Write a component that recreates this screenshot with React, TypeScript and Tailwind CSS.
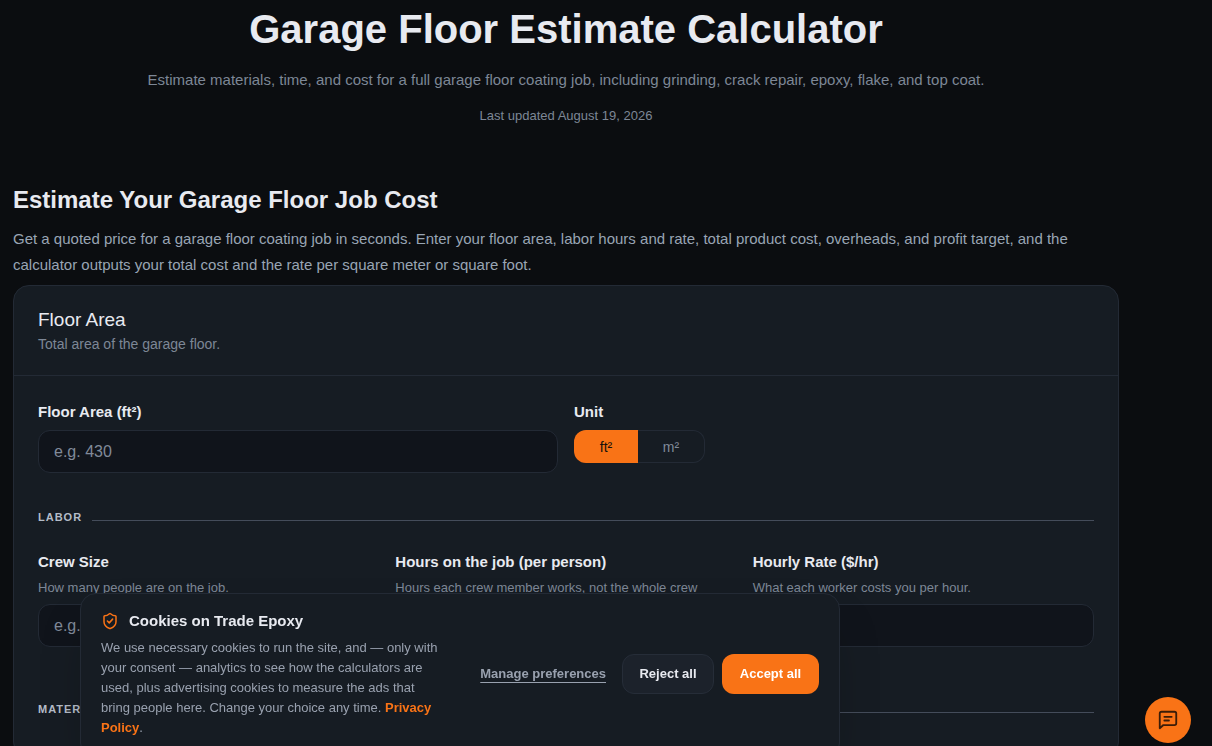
import React, { useState } from "react";

const inputClass =
  "w-full h-[43px] rounded-xl border border-[#232a35] bg-[#10141b] px-[15px] text-base text-[#e8eaf0] placeholder:text-[#808a99] focus:outline-none";

const ShieldIcon = () => (
  <svg width="18" height="18" viewBox="0 0 24 24" fill="none" stroke="currentColor" strokeWidth="2" strokeLinecap="round" strokeLinejoin="round" className="shrink-0 text-[#f97316]">
    <path d="M20 13c0 5-3.5 7.5-7.66 8.95a1 1 0 0 1-.67-.01C7.5 20.5 4 18 4 13V6a1 1 0 0 1 1-1c2 0 4.5-1.2 6.24-2.72a1.17 1.17 0 0 1 1.52 0C14.51 3.81 17 5 19 5a1 1 0 0 1 1 1z" />
    <path d="m8.5 12 2.5 2.5 4.5-5" />
  </svg>
);

const ChatIcon = () => (
  <svg width="22" height="22" viewBox="0 0 24 24" fill="none" stroke="currentColor" strokeWidth="2" strokeLinecap="round" strokeLinejoin="round">
    <path d="M21 15.5a2 2 0 0 1-2 2H7L3 21V5a2 2 0 0 1 2-2h14a2 2 0 0 1 2 2z" />
    <path d="M8 8.5h8" />
    <path d="M8 12.5h5" />
  </svg>
);

const Field = ({ id, label, hint, placeholder }: { id: string; label: string; hint?: string; placeholder?: string }) => {
  return (
    <div className="min-w-0">
      <label htmlFor={id} className="block text-[15px] leading-6 font-bold text-[#e8eaf0]">
        {label}
      </label>
      {hint && <p className="mt-1 text-[13px] leading-5 text-[#7d8796] whitespace-nowrap">{hint}</p>}
      <input id={id} type="text" inputMode="decimal" placeholder={placeholder} className={`${inputClass} mt-[6px]`} />
    </div>
  );
};

const SectionTitle = ({ children }: { children: React.ReactNode }) => {
  return (
    <div className="flex items-center gap-[10px]">
      <h4 className="text-[11px] leading-4 font-bold tracking-[1px] uppercase text-[#b4bcc8]">{children}</h4>
      <div className="mt-[6px] h-px flex-1 bg-[#444c5a]" />
    </div>
  );
};

const UnitToggle = ({ unit, setUnit }: { unit: string; setUnit: (unit: string) => void }) => {
  return (
    <div role="group" aria-labelledby="unit-label" className="mt-[6px] grid h-[33px] w-fit grid-cols-[64px_67px]">
      {["ft²", "m²"].map((item) => (
        <button
          key={item}
          type="button"
          aria-pressed={unit === item}
          onClick={() => setUnit(item)}
          className={
            unit === item
              ? "bg-[#f97316] text-sm font-medium text-[#14100c] first:rounded-l-xl last:rounded-r-xl"
              : "border border-[#232a35] text-sm font-medium text-[#808a99] first:rounded-l-xl first:border-r-0 last:rounded-r-xl last:border-l-0"
          }
        >
          {item}
        </button>
      ))}
    </div>
  );
};

const CookieBanner = () => {
  return (
    <section
      aria-label="Cookies"
      className="fixed -bottom-[13px] left-20 flex w-[760px] items-center gap-9 rounded-2xl border border-[#232a35] bg-[#161c23] px-5 pt-4 pb-5 shadow-2xl"
    >
      <div className="min-w-0 flex-1">
        <div className="flex items-center gap-[10px]">
          <ShieldIcon />
          <h2 className="text-[15px] leading-[22px] font-bold text-[#e8eaf0]">Cookies on Trade Epoxy</h2>
        </div>
        <p className="mt-[6px] text-[13px] leading-5 text-[#99a1af]">
          We use necessary cookies to run the site, and — only with your consent — analytics to see how the calculators
          are used, plus advertising cookies to measure the ads that bring people here. Change your choice any time.{" "}
          <a href="#privacy" className="font-bold text-[#f97316]">
            Privacy Policy
          </a>
          .
        </p>
      </div>
      <div className="flex shrink-0 items-center gap-2">
        <button type="button" className="mr-2 text-[13px] font-bold text-[#99a1af] underline underline-offset-4">
          Manage preferences
        </button>
        <button type="button" className="h-10 w-[92px] rounded-xl border border-[#262d38] bg-[#1c222b] text-[13px] font-bold text-[#e8eaf0]">
          Reject all
        </button>
        <button type="button" className="h-10 w-[97px] rounded-xl bg-[#f97316] text-[13px] font-bold text-white">
          Accept all
        </button>
      </div>
    </section>
  );
};

const App = () => {
  const [unit, setUnit] = useState("ft²");

  return (
    <div className="min-h-screen bg-[#0b0d10] font-['Liberation_Sans',Arial,sans-serif] text-[#e8eaf0]">
      <main className="pr-[93px] pl-[13px]">
        <header className="pt-1 text-center">
          <h1 className="text-[40px] leading-[50px] font-extrabold">Garage Floor Estimate Calculator</h1>
          <p className="mt-[13px] text-[15px] leading-[26px] text-[#7d8796]">
            Estimate materials, time, and cost for a full garage floor coating job, including grinding, crack repair,
            epoxy, flake, and top coat.
          </p>
          <p className="mt-[13px] text-[13px] leading-5 text-[#7d8796]">Last updated August 19, 2026</p>
        </header>

        <section className="mt-14">
          <h2 className="text-2xl leading-9 font-bold">Estimate Your Garage Floor Job Cost</h2>
          <p className="mt-2 text-[15px] leading-[26px] text-[#99a5b4]">
            Get a quoted price for a garage floor coating job in seconds. Enter your floor area, labor hours and rate,
            total product cost, overheads, and profit target, and the calculator outputs your total cost and the rate
            per square meter or square foot.
          </p>

          <div className="mt-[7px] rounded-2xl border border-[#232a35] bg-[#161c23]">
            <div className="border-b border-[#232a35] px-6 pt-5 pb-5">
              <h3 className="text-[19px] leading-7">Floor Area</h3>
              <p className="text-sm leading-[21px] text-[#7d8796]">Total area of the garage floor.</p>
            </div>

            <div className="px-6 pt-6 pb-10">
              <div className="grid grid-cols-2 gap-4">
                <Field id="area" label={`Floor Area (${unit})`} placeholder="e.g. 430" />
                <div>
                  <div id="unit-label" className="text-[15px] leading-6 font-bold">
                    Unit
                  </div>
                  <UnitToggle unit={unit} setUnit={setUnit} />
                </div>
              </div>

              <div className="mt-9">
                <SectionTitle>Labor</SectionTitle>
              </div>
              <div className="mt-[25px] grid grid-cols-3 gap-4">
                <Field id="crew" label="Crew Size" hint="How many people are on the job." placeholder="e.g. 2" />
                <Field id="hours" label="Hours on the job (per person)" hint="Hours each crew member works, not the whole crew" placeholder="e.g. 16" />
                <Field id="rate" label="Hourly Rate ($/hr)" hint="What each worker costs you per hour." />
              </div>

              <div className="mt-[54px]">
                <SectionTitle>Materials</SectionTitle>
              </div>
            </div>
          </div>
        </section>
      </main>

      <CookieBanner />

      <button
        type="button"
        aria-label="Open chat"
        className="fixed right-[21px] bottom-[3px] flex size-[46px] items-center justify-center rounded-full bg-[#f97316] text-[#3b1d08]"
      >
        <ChatIcon />
      </button>
    </div>
  );
};

export default App;
